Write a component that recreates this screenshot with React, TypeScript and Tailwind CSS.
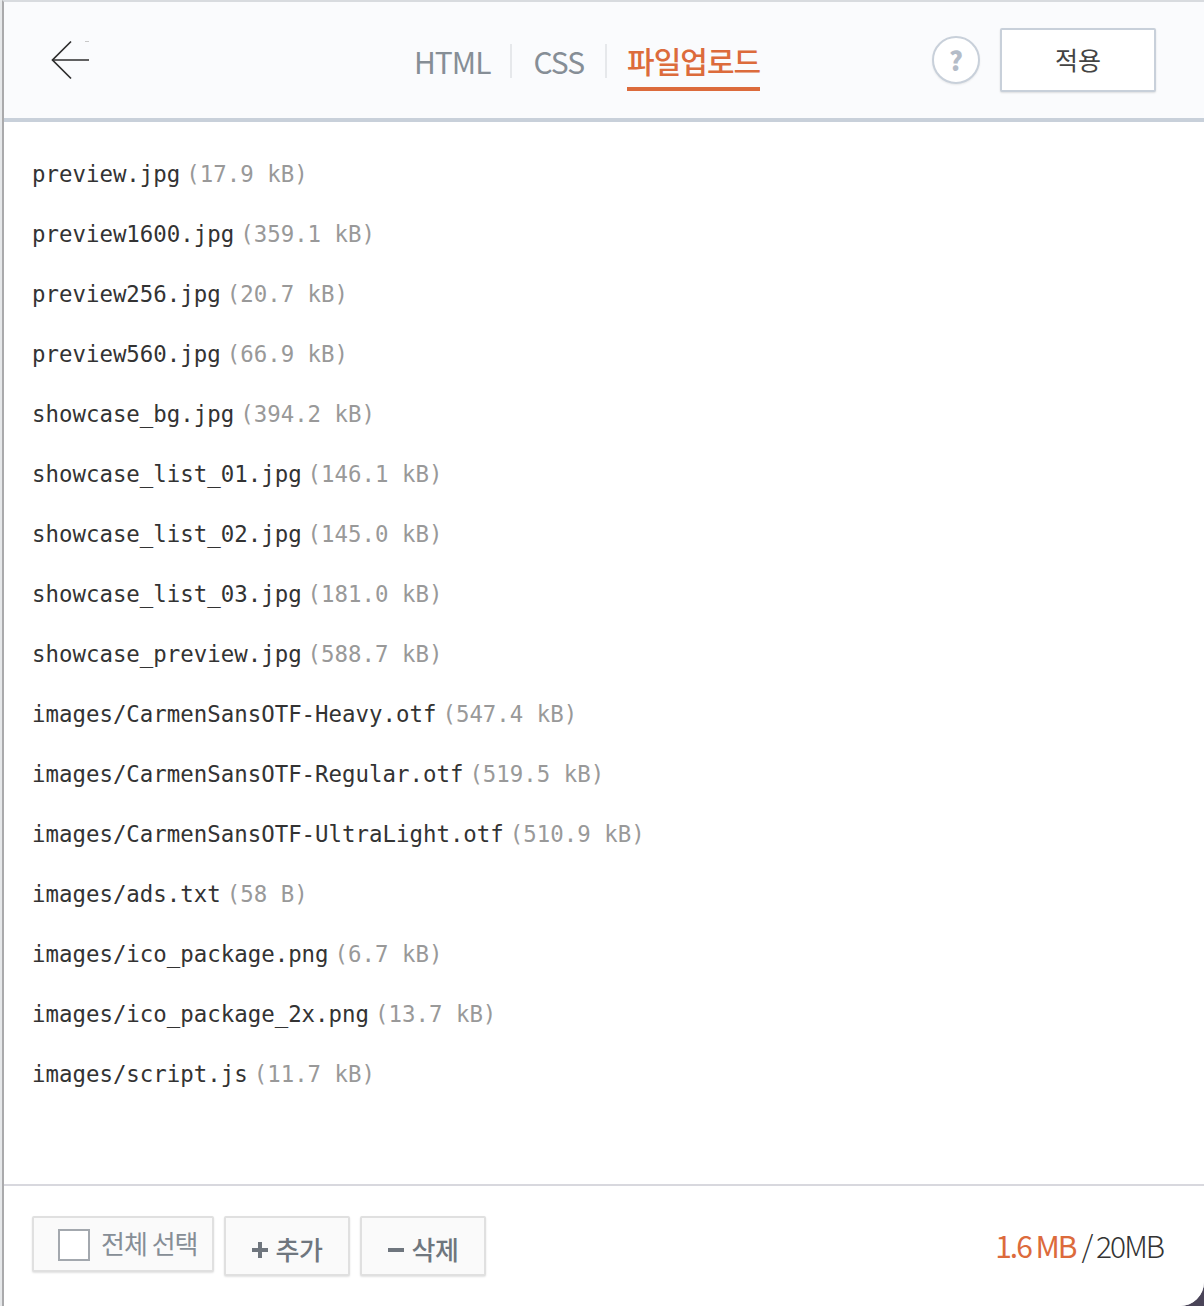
const KR = "font-['Noto_Sans_CJK_KR','Noto_Sans',sans-serif]";

const files: [string, string][] = [
  ["preview.jpg", "(17.9 kB)"],
  ["preview1600.jpg", "(359.1 kB)"],
  ["preview256.jpg", "(20.7 kB)"],
  ["preview560.jpg", "(66.9 kB)"],
  ["showcase_bg.jpg", "(394.2 kB)"],
  ["showcase_list_01.jpg", "(146.1 kB)"],
  ["showcase_list_02.jpg", "(145.0 kB)"],
  ["showcase_list_03.jpg", "(181.0 kB)"],
  ["showcase_preview.jpg", "(588.7 kB)"],
  ["images/CarmenSansOTF-Heavy.otf", "(547.4 kB)"],
  ["images/CarmenSansOTF-Regular.otf", "(519.5 kB)"],
  ["images/CarmenSansOTF-UltraLight.otf", "(510.9 kB)"],
  ["images/ads.txt", "(58 B)"],
  ["images/ico_package.png", "(6.7 kB)"],
  ["images/ico_package_2x.png", "(13.7 kB)"],
  ["images/script.js", "(11.7 kB)"],
];

export default function App() {
  return (
    <div className="w-[1204px] h-[1306px] bg-[#4a4458] overflow-hidden">
      <div className="h-full pl-[2px] bg-[#e6e8ea] rounded-br-[24px] overflow-hidden">
        <div className={`h-full flex flex-col bg-white border-t-2 border-l-2 border-t-[#d8dbdf] border-l-[#aaaaac] ${KR}`}>
          <header className="h-[120px] shrink-0 bg-[#fafbfd] border-b-4 border-[#c8d0da] flex items-center pl-[45px] pr-[48px]">
            <svg width="40" height="40" viewBox="0 0 40 40" className="shrink-0" fill="none" stroke="#2e2e2e" strokeWidth="1.7">
              <path d="M40 20H3.5" />
              <path d="M22 1.5 3.5 20 22 38.5" />
              <path d="M36 1.5h4" stroke="#c8c8c8" strokeWidth="1" />
            </svg>
            <nav className="flex items-center ml-[325px] h-full pt-[2px]">
              <span className="text-[30px] leading-none text-[#868e96] font-normal tracking-[-1px]">HTML</span>
              <span className="w-[2px] h-[34px] bg-[#e6e8eb] ml-[20px] mr-[21px]" />
              <span className="text-[30px] leading-none text-[#868e96] font-normal tracking-[-1px]">CSS</span>
              <span className="w-[2px] h-[34px] bg-[#e6e8eb] ml-[21px] mr-[20px]" />
              <span className="relative -top-[1px] text-[30px] leading-none text-[#dc6b3c] font-medium tracking-[-1px]">
                파일업로드
                <span className="absolute left-0 right-0 top-[42px] h-[4px] bg-[#dc6b3c]" />
              </span>
            </nav>
            <div className="ml-auto flex items-center gap-[20px]">
              <div className="w-[48px] h-[48px] rounded-full bg-white border-2 border-[#c8d0da] shadow-[0_1px_2px_rgba(0,0,0,0.08)] flex items-center justify-center text-[#b4bcc8] text-[26px] font-black leading-none">?</div>
              <button className="w-[156px] h-[64px] bg-white border-2 border-[#c8d0da] rounded-[2px] shadow-[0_1px_2px_rgba(0,0,0,0.12)] text-[25px] text-[#444] flex items-center justify-center">적용</button>
            </div>
          </header>
          <main className="flex-1 pt-[23px] pl-[28px]">
            {files.map(([name, size]) => (
              <div key={name} className="h-[60px] flex items-center text-[22.4px] font-['DejaVu_Sans_Mono',monospace] whitespace-nowrap">
                <span className="text-[#333]">{name}</span>
                <span className="ml-[6px] text-[#999]">{size}</span>
              </div>
            ))}
          </main>
          <footer className="h-[122px] shrink-0 border-t-2 border-[#d8d8de] flex items-start pl-[28px] pr-[41px]">
            <div className="mt-[30px] flex items-start gap-[10px]">
              <div className="w-[182px] h-[56px] bg-[#fafafa] border-2 border-[#e0e0e0] rounded-[2px] shadow-[0_1px_2px_rgba(0,0,0,0.12)] flex items-center pl-[24px] text-[#868e96] text-[26px] tracking-[-1px]">
                <span className="w-[32px] h-[32px] border-2 border-[#a3a8ae] bg-white mr-[11px] mt-[2px] shrink-0" />
                <span className="-mt-[3px]">전체 선택</span>
              </div>
              <button className="w-[126px] h-[60px] bg-[#fafafa] border-2 border-[#e0e0e0] rounded-[2px] shadow-[0_1px_2px_rgba(0,0,0,0.12)] flex items-center justify-center gap-[8px] text-[#6f767e] text-[26px] font-medium tracking-[-0.5px] pt-[4px]">
                <svg width="16" height="16" viewBox="0 0 16 16" className="mt-[4px]" fill="none" stroke="#6f767e" strokeWidth="4">
                  <path d="M0 8h16M8 0v16" />
                </svg>
                추가
              </button>
              <button className="w-[126px] h-[60px] bg-[#fafafa] border-2 border-[#e0e0e0] rounded-[2px] shadow-[0_1px_2px_rgba(0,0,0,0.12)] flex items-center justify-center gap-[8px] text-[#6f767e] text-[26px] font-medium tracking-[-0.5px] pt-[4px]">
                <svg width="16" height="16" viewBox="0 0 16 16" className="mt-[4px]" fill="none" stroke="#6f767e" strokeWidth="4">
                  <path d="M0 8h16" />
                </svg>
                삭제
              </button>
            </div>
            <div className="ml-auto mt-[37px] text-[30px] leading-[44px] font-light tracking-[-2px] text-[#333]">
              <span className="text-[#dc6b3c] font-normal">1.6 MB</span>
              <span className="ml-[6px]">/ 20MB</span>
            </div>
          </footer>
        </div>
      </div>
    </div>
  );
}
